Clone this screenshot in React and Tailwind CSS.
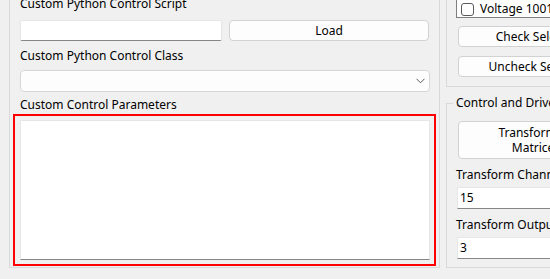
import React from 'react';

const Chevron = () => (
  <svg width="9" height="6" viewBox="0 0 9 6" fill="none">
    <path d="M0.5 0.8 L4.5 4.8 L8.5 0.8" stroke="#5c5c5c" strokeWidth="1" />
  </svg>
);

const App = () => {
  return (
    <div className="w-[550px] h-[279px] overflow-hidden bg-[#f0f0f0] flex items-start font-['Noto_Sans',sans-serif] text-[12px] leading-[16px] text-black">
      {/* left group: custom control */}
      <div className="ml-[9px] -mt-[10px] w-[431px] h-[278px] flex-none border border-[#d9d9d9] pl-[10px] pr-[9px] pt-[5px] flex flex-col">
        <div className="h-[16px] whitespace-nowrap">Custom Python Control Script</div>
        <div className="mt-[8px] flex gap-[7px] h-[21px]">
          <div className="w-[202px] bg-white border border-[#e6e6e6] border-b-[#868686] rounded-[2px]" />
          <button className="flex-1 mr-[1px] bg-[#fdfdfd] border border-[#d2d2d2] rounded-[4px]">Load</button>
        </div>
        <div className="mt-[7px] h-[16px] whitespace-nowrap">Custom Python Control Class</div>
        <div className="mt-[6px] h-[22px] flex items-center justify-end pr-[4px] bg-[#fdfdfd] border border-[#d6d6d6] rounded-[4px]">
          <Chevron />
        </div>
        <div className="mt-[5px] h-[16px] whitespace-nowrap">Custom Control Parameters</div>
        <div className="relative mt-[7px] h-[140px] bg-white border border-[#e6e6e6] border-b-[#868686]">
          <div className="absolute -top-[7px] -left-[8px] -right-[7px] -bottom-[7px] border-2 border-[#ff0000]" />
        </div>
      </div>

      {/* right column */}
      <div className="ml-[6px] -mt-[10px] w-[200px] flex-none flex flex-col">
        <div className="h-[97px] border border-[#d9d9d9] pl-[9px] flex flex-col">
          <div className="h-[27px] flex items-end pb-[1px] pl-[4px] bg-white border border-[#7f7f7f] border-t-0">
            <span className="w-[13px] h-[13px] rounded-[3px] border border-[#5a5a5a] bg-white flex-none" />
            <span className="ml-[6px] whitespace-nowrap leading-[14px]">Voltage 1001</span>
          </div>
          <button className="mt-[8px] ml-[2px] h-[21px] w-[160px] bg-[#fdfdfd] border border-[#d2d2d2] rounded-[4px] whitespace-nowrap">Check Selected</button>
          <button className="mt-[9px] ml-[2px] h-[21px] w-[160px] bg-[#fdfdfd] border border-[#d2d2d2] rounded-[4px] whitespace-nowrap">Uncheck Selected</button>
        </div>

        <fieldset className="mt-[8px] h-[173px] border border-[#d9d9d9] pl-[10px] pb-[8px]">
          <legend className="-ml-[4px] px-[3px] whitespace-nowrap">Control and Drive Settings</legend>
          <button className="mt-[10px] ml-[1px] h-[38px] w-[156px] bg-[#fdfdfd] border border-[#d2d2d2] rounded-[4px] text-center leading-[15px] whitespace-nowrap">
            Transform All
            <br />
            Matrices
          </button>
          <div className="mt-[8px] h-[16px] whitespace-nowrap -ml-[1px]">Transform Channels</div>
          <div className="mt-[4px] h-[22px] w-[170px] bg-white border border-[#e6e6e6] border-b-[#868686] pl-[2px] flex items-center">15</div>
          <div className="mt-[8px] h-[16px] whitespace-nowrap -ml-[1px]">Transform Outputs</div>
          <div className="mt-[4px] h-[22px] w-[170px] bg-white border border-[#e6e6e6] border-b-[#868686] pl-[2px] flex items-center">3</div>
        </fieldset>
      </div>
    </div>
  );
};

export default App;
